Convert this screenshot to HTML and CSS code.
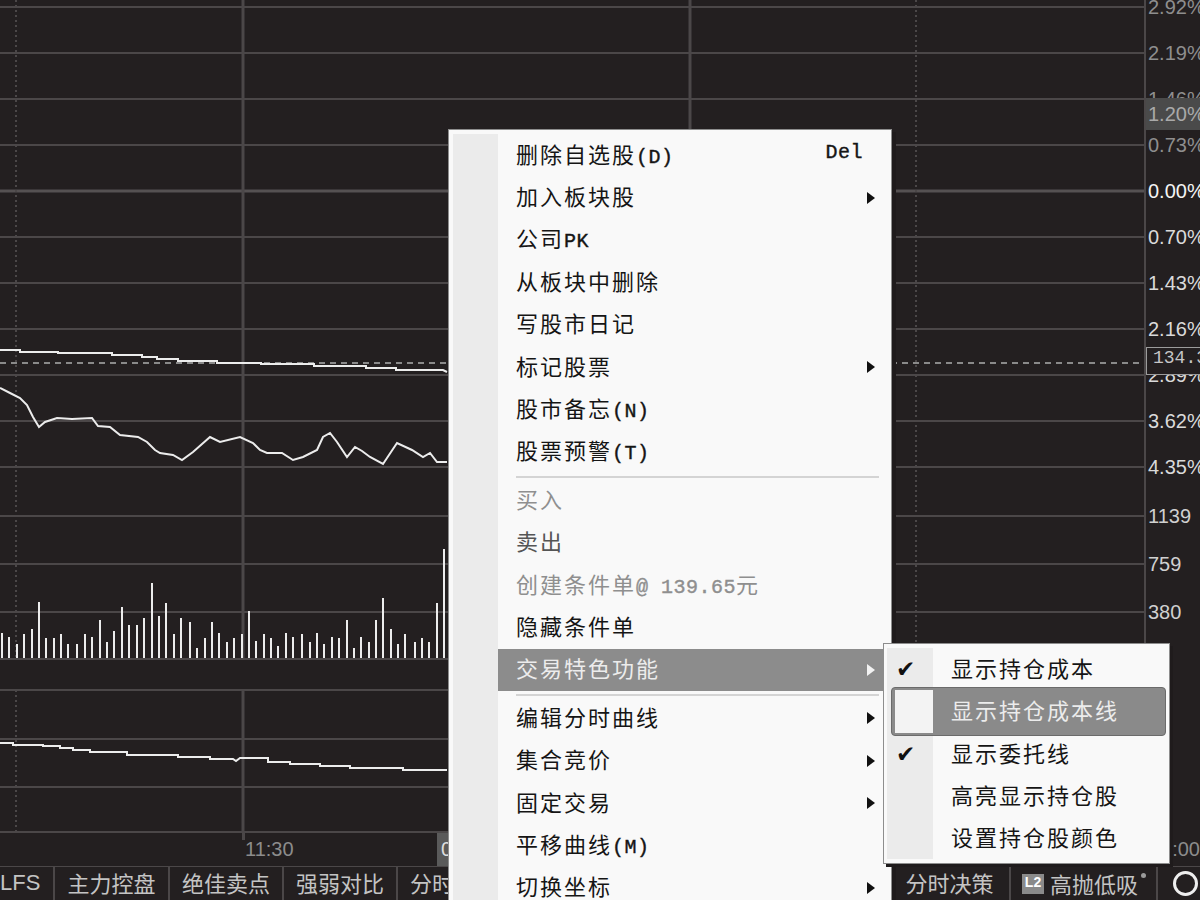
FILE: index.html
```html
<!DOCTYPE html>
<html lang="zh-CN">
<head>
  <meta charset="UTF-8">
  <meta name="viewport" content="width=device-width, initial-scale=1.0">
  <title>分时走势</title>
  <link rel="stylesheet" href="styles.css">
</head>
<body>

<div class="terminal">
  <div class="plot">
    <svg width="1144" height="833" viewBox="0 0 1144 833">
      <!-- 网格 -->
      <path class="grid" d="M0 7H1144M0 53H1144M0 99H1144M0 145H1144M0 237H1144M0 283H1144M0 329H1144M0 375H1144M0 421H1144M0 467H1144M0 516H1144M0 564H1144M0 612H1144M0 659H1144M0 690H1144M0 739H1144M0 787H1144M0 832H1144"/>
      <path class="grid-zero" d="M0 191H1144"/>
      <path class="grid-dot" d="M16 0V659M16 690V833M916 0V659M916 690V833"/>
      <path class="grid-v" d="M243 0V659M243 690V833M690 0V659M690 690V833"/>
      <!-- 昨收参考线 -->
      <path class="ref-line" d="M0 363H1144"/>
      <!-- 均价线 -->
      <path class="line" d="M0 350H20V352H58V353H112V355H142V357H157V359H178V361H217V363H261V364H314V366H366V368H396V370H443L447 372"/>
      <!-- 分时价格 -->
      <polyline class="line" points="0,388 10,393 20,398 27,405 33,417 39,427 45,422 57,418 72,419 92,418 98,426 110,427 120,435 138,437 147,442 155,450 160,453 173,455 182,460 193,452 210,437 220,442 240,437 253,443 260,450 267,453 282,453 293,460 303,457 317,450 323,437 330,433 337,442 347,457 355,447 362,451 370,457 383,464 397,443 412,450 423,457 430,453 437,462 447,462"/>
      <!-- 成交量 -->
      <path class="line" d="M2 658V633M9 658V637M17 658V644M24 658V634M32 658V629M39 658V602M46 658V638M54 658V638M61 658V634M68 658V644M77 658V644M85 658V634M92 658V637M100 658V620M107 658V642M114 658V631M122 658V607M129 658V625M137 658V625M144 658V618M152 658V583M159 658V616M166 658V603M174 658V634M181 658V618M190 658V622M197 658V648M205 658V638M212 658V622M219 658V633M227 658V642M234 658V638M242 658V634M249 658V611M256 658V641M264 658V634M271 658V638M278 658V646M286 658V633M293 658V637M302 658V634M310 658V642M317 658V633M324 658V644M332 658V637M339 658V638M347 658V620M354 658V648M361 658V637M369 658V642M376 658V620M383 658V598M391 658V629M398 658V644M405 658V634M415 658V642M422 658V638M429 658V642M437 658V603M444 658V549"/>
      <!-- 副图指标 -->
      <path class="line" d="M0 743H13V745H43V746H60V748H73V750H90V752H127V755H178V757H210V759H233L236 761L240 758H268V762H290V764H320V766H350V768H403V770H447"/>
    </svg>
  </div>

  <div class="scale">
    <div class="tick up first">2.92%</div>
    <div class="tick up">2.19%</div>
    <div class="tick up">1.46%</div>
    <div class="tick up">0.73%</div>
    <div class="tick zero">0.00%</div>
    <div class="tick down">0.70%</div>
    <div class="tick down">1.43%</div>
    <div class="tick down">2.16%</div>
    <div class="tick down">2.89%</div>
    <div class="tick down">3.62%</div>
    <div class="tick down">4.35%</div>
    <div class="tick vol vol-first">1139</div>
    <div class="tick vol">759</div>
    <div class="tick vol">380</div>

    <div class="scale-mark">1.20%</div>
    <div class="scale-price">134.31</div>
  </div>

  <div class="time-axis">
    <span class="time-gap"></span>
    <span class="time-tick"></span>
    <span class="time-label">11:30</span>
    <span class="time-cursor">09:26</span>
    <span class="time-end">15:00</span>
  </div>

  <div class="tabs">
    <div class="tab tab-lfs">LFS</div>
    <div class="tab w115">主力控盘</div>
    <div class="tab">绝佳卖点</div>
    <div class="tab">强弱对比</div>
    <div class="tab">分时资金</div>
    <div class="tab">多空博弈</div>
    <div class="tab">量能异动</div>
    <div class="tab w150">主力追踪</div>
    <div class="tab w121">分时决策</div>
    <div class="tab tab-l2">
      <span class="badge">L2</span>
      <span>高抛低吸</span>
      <span class="dot"></span>
    </div>
    <div class="tab tab-ring"><span class="ring"></span></div>
  </div>
</div>

<div class="menu">
  <ul class="menu-list">
    <li class="item"><span>删除自选股<span class="lat">(D)</span></span><span class="key lat">Del</span></li>
    <li class="item more"><span>加入板块股</span></li>
    <li class="item"><span>公司<span class="lat">PK</span></span></li>
    <li class="item"><span>从板块中删除</span></li>
    <li class="item"><span>写股市日记</span></li>
    <li class="item more"><span>标记股票</span></li>
    <li class="item"><span>股市备忘<span class="lat">(N)</span></span></li>
    <li class="item"><span>股票预警<span class="lat">(T)</span></span></li>
    <li class="sep"></li>
    <li class="item off"><span>买入</span></li>
    <li class="item dim"><span>卖出</span></li>
    <li class="item off"><span>创建条件单<span class="lat">@ 139.65</span>元</span></li>
    <li class="item"><span>隐藏条件单</span></li>
    <li class="item more active"><span>交易特色功能</span></li>
    <li class="sep"></li>
    <li class="item more"><span>编辑分时曲线</span></li>
    <li class="item more"><span>集合竞价</span></li>
    <li class="item more"><span>固定交易</span></li>
    <li class="item"><span>平移曲线<span class="lat">(M)</span></span></li>
    <li class="item more"><span>切换坐标</span></li>
  </ul>
</div>

<div class="submenu">
  <ul class="sub-list">
    <li class="sub-item"><span class="check">✔</span><span class="sub-label">显示持仓成本</span></li>
    <li class="sub-item on"><span class="check"></span><span class="sub-label">显示持仓成本线</span></li>
    <li class="sub-item"><span class="check">✔</span><span class="sub-label">显示委托线</span></li>
    <li class="sub-item"><span class="check"></span><span class="sub-label">高亮显示持仓股</span></li>
    <li class="sub-item"><span class="check"></span><span class="sub-label">设置持仓股颜色</span></li>
  </ul>
</div>

</body>
</html>
```

FILE: styles.css
```css
html,
body {
  margin: 0;
  padding: 0;
  overflow: hidden;
}
body {
  width: 1200px;
  height: 900px;
  position: relative;
  background: #231f20;
  font-family: "Liberation Sans", Arial, sans-serif;
}

/* 主体：走势图 + 右侧刻度 + 时间轴 + 底部标签 */
.terminal {
  display: grid;
  grid-template-columns: 1144px 56px;
  grid-template-rows: 833px 33px 34px;
  height: 900px;
}
.plot svg {
  display: block;
}
.grid {
  stroke: #4b4748;
  stroke-width: 2;
  fill: none;
}
.grid-zero {
  stroke: #555152;
  stroke-width: 3;
}
.grid-v {
  stroke: #4b4748;
  stroke-width: 3;
}
.grid-dot {
  stroke: #4b4748;
  stroke-width: 2;
  stroke-dasharray: 2 3;
}
.ref-line {
  stroke: #8a8a8a;
  stroke-width: 2;
  stroke-dasharray: 6 5;
}
.line {
  fill: none;
  stroke: #ececec;
  stroke-width: 2;
}

/* 右侧刻度 */
.scale {
  position: relative;
  display: flex;
  flex-direction: column;
  border-left: 2px solid #4b4748;
  padding-left: 2px;
  font-size: 20px;
}
.tick {
  flex: none;
  height: 46px;
  line-height: 46px;
  white-space: nowrap;
}
.tick.first {
  margin-top: -16px;
}
.tick.up {
  color: #8e8e8e;
}
.tick.zero {
  color: #f4f4f4;
}
.tick.down {
  color: #dadada;
}
.tick.vol {
  height: 48px;
  line-height: 48px;
  color: #d0d0d0;
}
.tick.vol-first {
  margin-top: 2px;
}
.scale-mark {
  position: absolute;
  left: 0;
  right: 0;
  top: 98px;
  height: 32px;
  line-height: 32px;
  padding-left: 2px;
  background: #4a4a4a;
  color: #a9a9a9;
}
.scale-price {
  position: absolute;
  left: 0;
  top: 347px;
  width: 70px;
  height: 26px;
  line-height: 25px;
  padding-left: 6px;
  border: 1px solid #9c9c9c;
  background: #231f20;
  color: #c6c6c6;
  font: 18px "Liberation Mono", monospace;
}

/* 时间轴 */
.time-axis {
  grid-column: 1 / -1;
  display: flex;
  align-items: flex-start;
  color: #8c8c8c;
  font-size: 20px;
  line-height: 33px;
}
.time-gap {
  width: 242px;
}
.time-tick {
  width: 3px;
  height: 7px;
  background: #4b4748;
}
.time-label {
  width: 192px;
}
.time-cursor {
  padding: 0 4px;
  background: #5a5a5a;
  color: #dedede;
}
.time-end {
  margin-left: auto;
}

/* 底部标签栏 */
.tabs {
  grid-column: 1 / -1;
  display: flex;
  border-top: 1px solid #4b4748;
  color: #c4c4c4;
  font: 22px "Noto Sans CJK SC", sans-serif;
}
.tab {
  flex: none;
  box-sizing: border-box;
  width: 114px;
  border-right: 2px solid #4b4748;
  text-align: center;
  line-height: 31px;
  white-space: nowrap;
  overflow: hidden;
}
.tab-lfs {
  width: 55px;
  text-align: left;
  font-family: "Liberation Sans", Arial, sans-serif;
}
.w115 {
  width: 115px;
}
.w150 {
  width: 150px;
}
.w121 {
  width: 121px;
}
.tab-l2 {
  width: 147px;
  display: flex;
  align-items: center;
  gap: 6px;
  padding-left: 11px;
}
.badge {
  width: 22px;
  height: 20px;
  line-height: 20px;
  background: #8a8a8a;
  color: #fff;
  font: bold 14px "Liberation Sans", Arial, sans-serif;
  text-align: center;
}
.dot {
  align-self: flex-start;
  margin: 6px 0 0 -3px;
  width: 5px;
  height: 5px;
  border-radius: 50%;
  background: #9a9a9a;
}
.tab-ring {
  width: auto;
  flex: 1;
  border-right: none;
  display: flex;
  align-items: center;
  padding-left: 15px;
}
.ring {
  width: 19px;
  height: 19px;
  border: 3px solid #eeeeee;
  border-radius: 50%;
}

/* 右键菜单 */
.menu {
  position: absolute;
  left: 448px;
  top: 129px;
  width: 444px;
  box-sizing: border-box;
  border: 1px solid #8d8d8d;
  background: #f9f9f9;
  padding: 4px 8px 4px 4px;
  box-shadow: 4px 3px 0 #1f1b1c;
  color: #151515;
  font: 22px "Noto Sans CJK SC", sans-serif;
  letter-spacing: 2px;
}
.menu-list,
.sub-list {
  list-style: none;
  margin: 0;
  padding: 0;
}
.menu-list {
  background: linear-gradient(to right, #ebebeb 45px, transparent 45px);
}
.item {
  display: flex;
  align-items: center;
  justify-content: space-between;
  box-sizing: border-box;
  height: 42.4px;
  margin-left: 45px;
  padding: 0 8px 5px 18px;
  white-space: nowrap;
}
.lat {
  font-family: "Liberation Mono", monospace;
  font-size: 20px;
  letter-spacing: 0.5px;
  -webkit-text-stroke: 0.4px currentColor;
}
.key {
  margin-right: 12px;
}
.more::after {
  content: "";
  margin-top: 5px;
  border-left: 8px solid #111;
  border-top: 6.5px solid transparent;
  border-bottom: 6.5px solid transparent;
}
.off {
  color: #8f8f8f;
}
.dim {
  color: #555;
}
.active {
  background: #8c8c8c;
  color: #ececec;
}
.active::after {
  border-left-color: #f2f2f2;
}
.sep {
  height: 2px;
  margin: 3px 4px 1px 63px;
  background: #d4d4d4;
}

/* 子菜单 */
.submenu {
  position: absolute;
  left: 883px;
  top: 643px;
  width: 287px;
  box-sizing: border-box;
  border: 1px solid #8d8d8d;
  background: #f9f9f9;
  padding: 4px 3px;
  box-shadow: 3px 3px 0 #1f1b1c;
  color: #151515;
  font: 22px "Noto Sans CJK SC", sans-serif;
  letter-spacing: 2px;
}
.sub-list {
  background: linear-gradient(to right, #ebebeb 46px, transparent 46px);
}
.sub-item {
  display: grid;
  grid-template-columns: 46px 1fr;
  align-items: center;
  height: 42.25px;
  white-space: nowrap;
}
.check {
  align-self: stretch;
  display: flex;
  align-items: center;
  padding-left: 9px;
  font: 23px "DejaVu Sans", sans-serif;
  letter-spacing: 0;
  color: #111;
}
.sub-label {
  padding-bottom: 4px;
  padding-left: 18px;
}
.sub-item.on {
  box-sizing: border-box;
  height: 48.25px;
  margin: -3px 0 -3px 4px;
  padding: 2px 0 2px 3px;
  grid-template-columns: 38px 1fr;
  border: 1px solid #6b6b6b;
  border-radius: 4px;
  background: #8a8a8a;
  color: #ececec;
}
.sub-item.on .check {
  padding-left: 0;
  background: #f3f3f3;
}
```
